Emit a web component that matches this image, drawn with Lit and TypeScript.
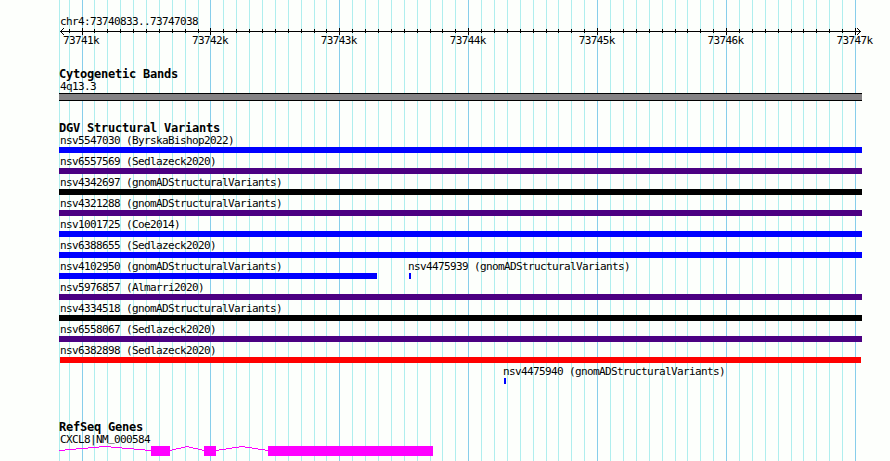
import { LitElement, html, svg, css } from "lit";
import { customElement } from "lit/decorators.js";

const STEP = 12.891;
const ORIGIN = 82.02;

interface Feature { label: string; color: string; start?: number; end?: number }
const rows: Feature[][] = [
  [{ label: "nsv5547030 (ByrskaBishop2022)", color: "#0000ff" }],
  [{ label: "nsv6557569 (Sedlazeck2020)", color: "#4b0082" }],
  [{ label: "nsv4342697 (gnomADStructuralVariants)", color: "#000000" }],
  [{ label: "nsv4321288 (gnomADStructuralVariants)", color: "#4b0082" }],
  [{ label: "nsv1001725 (Coe2014)", color: "#0000ff" }],
  [{ label: "nsv6388655 (Sedlazeck2020)", color: "#0000ff" }],
  [
    { label: "nsv4102950 (gnomADStructuralVariants)", color: "#0000ff", end: 377 },
    { label: "nsv4475939 (gnomADStructuralVariants)", color: "#0000ff", start: 409, end: 411 },
  ],
  [{ label: "nsv5976857 (Almarri2020)", color: "#4b0082" }],
  [{ label: "nsv4334518 (gnomADStructuralVariants)", color: "#000000" }],
  [{ label: "nsv6558067 (Sedlazeck2020)", color: "#4b0082" }],
  [{ label: "nsv6382898 (Sedlazeck2020)", color: "#ff0000", start: 60, end: 861 }],
  [{ label: "nsv4475940 (gnomADStructuralVariants)", color: "#0000ff", start: 504, end: 506 }],
];

const ticks = Array.from({ length: 62 }, (_, i) => ({
  x: Math.floor(ORIGIN + (i - 1) * STEP),
  major: (i - 1) % 10 === 0,
}));

@customElement("app-root")
export class AppRoot extends LitElement {
  static styles = css`
    :host {
      display: block;
      position: relative;
      width: 890px;
      height: 461px;
      overflow: hidden;
      background: #fdfffc;
      color: #000;
      font: 11px/13px "DejaVu Sans Mono", monospace;
    }
    svg { display: block; shape-rendering: crispEdges; }
    .grid { position: absolute; inset: 0; }
    .tracks { position: relative; display: flex; flex-direction: column; padding: 15px 0 0 59px; }
    .small, .region { letter-spacing: -0.622px; white-space: pre; }
    .region { height: 13px; padding-left: 1px; }
    .axis { height: 7px; margin-left: -59px; }
    .numbers {
      display: grid;
      grid-template-columns: repeat(7, 128.91px);
      height: 14px;
      margin: -1px 0 0 4px;
    }
    .title {
      height: 12px;
      font-size: 12px;
      font-weight: bold;
      letter-spacing: -0.224px;
      white-space: pre;
    }
    .cyto { margin-top: 20px; }
    .cyto .small { height: 13px; padding-left: 1px; }
    .band {
      box-sizing: border-box;
      width: 803px;
      height: 8px;
      border: solid #000;
      border-width: 1px 0;
      background: #848284;
    }
    .variants { margin-top: 21px; }
    .row { display: grid; height: 21px; }
    .feature { grid-area: 1 / 1; }
    .feature .small { height: 13px; padding-left: 1px; }
    .bar { height: 6px; }
    .genes { margin-top: 35px; }
    .genes .small { height: 12px; padding-left: 1px; }
    .genes svg { margin-left: -59px; }
    .raised { position: relative; top: -2px; }
  `;

  feature(f: Feature) {
    const start = f.start ?? 59;
    const end = f.end ?? 862;
    const labelOffset = start > 60 ? start - 61 : 0;
    return html`<div class="feature">
      <div class="small" style="margin-left:${labelOffset}px">${f.label}</div>
      <div class="bar" style="margin-left:${start - 59}px;width:${end - start}px;background:${f.color}"></div>
    </div>`;
  }

  render() {
    return html`
      <svg class="grid" width="890" height="461">
        <rect x="59" y="0" width="1" height="461" fill="#afeeee" />
        ${ticks.map((t) => svg`<rect x=${t.x} y="0" width="1" height="461" fill=${t.major ? "#87ceeb" : "#afeeee"} />`)}
      </svg>
      <div class="tracks">
        <div class="region">chr4:73740833..73747038</div>
        <svg class="axis" width="890" height="7">
          <rect x="60" y="3" width="801" height="1" />
          ${ticks.map((t) => t.major
            ? svg`<rect x=${t.x} y="0" width="1" height="7" />`
            : svg`<rect x=${t.x} y="1" width="1" height="4" />`)}
          ${[1, 2, 3].map((d) => svg`
            <rect x=${60 + d} y=${3 - d} width="1" height="1" />
            <rect x=${60 + d} y=${3 + d} width="1" height="1" />
            <rect x=${860 - d} y=${3 - d} width="1" height="1" />
            <rect x=${860 - d} y=${3 + d} width="1" height="1" />`)}
        </svg>
        <div class="numbers small">
          ${[1, 2, 3, 4, 5, 6, 7].map((n) => html`<span>7374${n}k</span>`)}
        </div>
        <section class="cyto">
          <div class="title">Cytogenetic Bands</div>
          <div class="small">4q13.3</div>
          <div class="band"></div>
        </section>
        <section class="variants">
          <div class="title">DGV Structural Variants</div>
          ${rows.map((r) => html`<div class="row">${r.map((f) => this.feature(f))}</div>`)}
        </section>
        <section class="genes">
          <div class="title">RefSeq Genes</div>
          <div class="small">CXCL8|NM<span class="raised">_</span>000584</div>
          <svg width="890" height="12">
            <g fill="none" stroke="#ff00ff">
              <path d="M59 5.5L105 1.5L151 5.5M170 5.5L187 1.5L204 5.5M216 5.5L242 1.5L268 5.5" />
            </g>
            <g fill="#ff00ff">
              <rect x="151" y="1" width="19" height="10" />
              <rect x="204" y="1" width="12" height="10" />
              <rect x="268" y="1" width="165" height="10" />
            </g>
          </svg>
        </section>
      </div>`;
  }
}
